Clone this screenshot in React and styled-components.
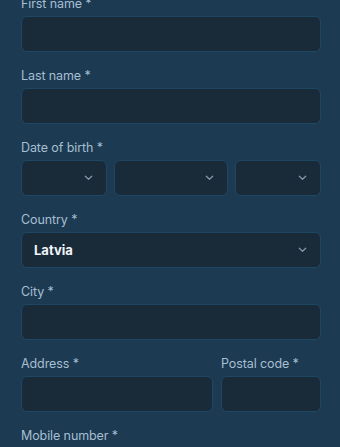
import React from "react";
import styled, { createGlobalStyle } from "styled-components";

const GlobalStyle = createGlobalStyle`
  html, body {
    margin: 0;
    padding: 0;
    background: #1c3a51;
    overflow: hidden;
  }
  body {
    font-family: Inter, "Noto Sans", sans-serif;
  }
`;

const Page = styled.div`
  width: 340px;
  height: 447px;
  background: #1c3a51;
  overflow: hidden;
`;

const Form = styled.form`
  display: flex;
  flex-direction: column;
  gap: 16px;
  padding: 0 19px 0 21px;
  margin-top: -4px;
`;

const Field = styled.div`
  display: flex;
  flex-direction: column;
  gap: 4px;
  min-width: 0;
`;

const Label = styled.label`
  font-size: 12.5px;
  line-height: 16px;
  color: #a6bfd2;
  letter-spacing: -0.1px;
`;

const Box = styled.div`
  height: 36px;
  box-sizing: border-box;
  border: 1px solid #1f4764;
  border-radius: 6px;
  background: #192a39;
  display: flex;
  align-items: center;
  justify-content: space-between;
  padding: 0 12px;
`;

const Value = styled.span`
  color: #f2f5f8;
  font-weight: 700;
  font-size: 13px;
`;

const DateRow = styled.div`
  display: grid;
  grid-template-columns: 86px 1fr 86px;
  gap: 7px;
`;

const SplitRow = styled.div`
  display: grid;
  grid-template-columns: 1fr 100px;
  gap: 8px;
`;

const Chevron = () => (
  <svg width="9" height="6" viewBox="0 0 9 6" style={{ marginLeft: "auto", marginRight: 1 }}>
    <path d="M1.3 1.3 L4.5 4.3 L7.7 1.3" fill="none" stroke="#8297a8" strokeWidth="1.3" strokeLinecap="round" strokeLinejoin="round" />
  </svg>
);

const Select = ({ value }) => (
  <Box>
    {value && <Value>{value}</Value>}
    <Chevron />
  </Box>
);

export default function App() {
  return (
    <Page>
      <GlobalStyle />
      <Form>
        <Field>
          <Label>First name *</Label>
          <Box />
        </Field>
        <Field>
          <Label>Last name *</Label>
          <Box />
        </Field>
        <Field>
          <Label>Date of birth *</Label>
          <DateRow>
            <Select />
            <Select />
            <Select />
          </DateRow>
        </Field>
        <Field>
          <Label>Country *</Label>
          <Select value="Latvia" />
        </Field>
        <Field>
          <Label>City *</Label>
          <Box />
        </Field>
        <SplitRow>
          <Field>
            <Label>Address *</Label>
            <Box />
          </Field>
          <Field>
            <Label>Postal code *</Label>
            <Box />
          </Field>
        </SplitRow>
        <Field>
          <Label>Mobile number *</Label>
          <Box />
        </Field>
      </Form>
    </Page>
  );
}
